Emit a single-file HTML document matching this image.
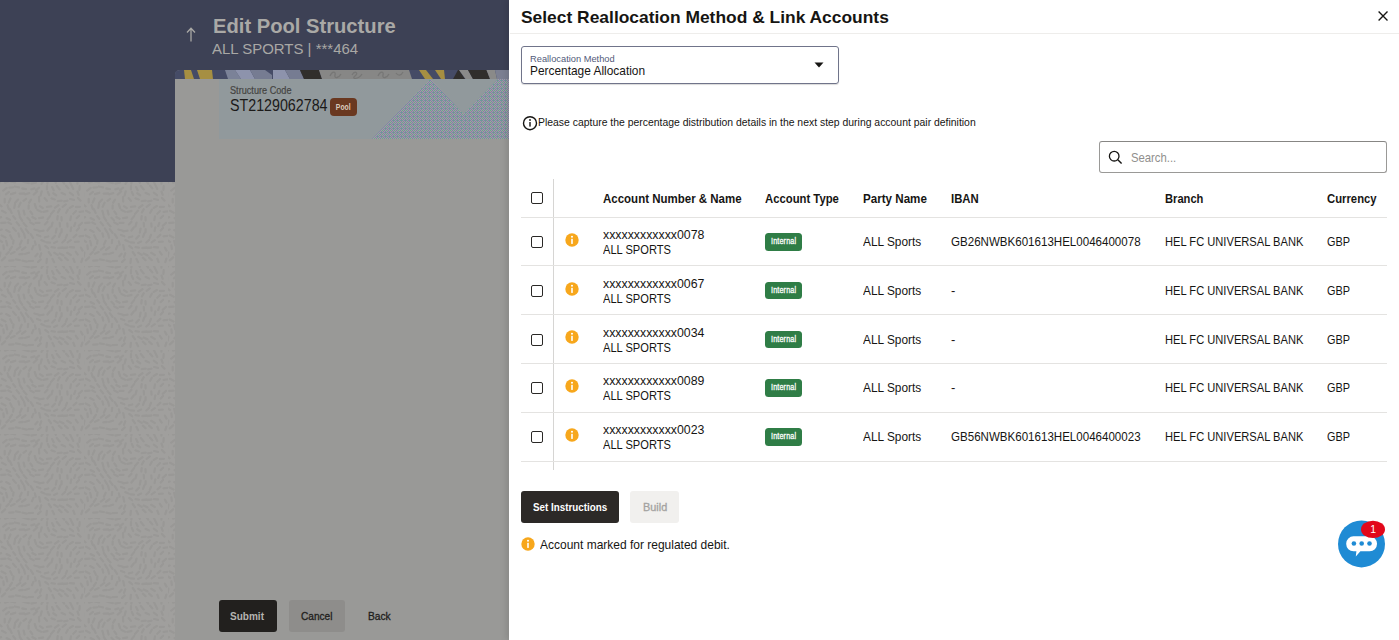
<!DOCTYPE html>
<html>
<head>
<meta charset="utf-8">
<title>Edit Pool Structure</title>
<style>
*{box-sizing:border-box;margin:0;padding:0}
html,body{width:1399px;height:640px;overflow:hidden;background:#9f9e9c;font-family:"Liberation Sans",sans-serif;}
.abs{position:absolute}
.t{position:absolute;transform-origin:0 50%;white-space:nowrap;line-height:1}
#left{position:absolute;left:0;top:0;width:510px;height:640px;background:#a09f9d;overflow:hidden}
#hdr{position:absolute;left:0;top:0;width:510px;height:182px;background:#3d4155}
#card{position:absolute;left:175px;top:70px;width:335px;height:570px;background:#999997;border-top-left-radius:5px}
#info{position:absolute;left:219px;top:79px;width:291px;height:60px;background:#91999c;overflow:hidden}
#drawer{position:absolute;left:509px;top:0;width:890px;height:640px;background:#fff;box-shadow:-3px 0 6px rgba(0,0,0,.10)}
.hline{position:absolute;height:1px;background:#e4e3e1}
.cb{position:absolute;width:12px;height:12px;border:1.2px solid #2a2826;border-radius:2px;background:#fff}
.warn{position:absolute;width:14px;height:14px}
.badge{position:absolute;width:37.300px;height:17.500px;background:#2f7d46;border-radius:3.500px;color:#fff;font-size:9px;line-height:17.500px;text-align:center}
.badge span{display:inline-block;transform:scaleX(.8);letter-spacing:.15px;-webkit-text-stroke:.3px #fff}
.c{color:#161513}
.th{font-size:13px;font-weight:bold}
.td{font-size:13px}
</style>
</head>
<body>
<div id="left">
  <div id="hdr"></div>
  <svg class="abs" style="left:0;top:182px" width="175" height="458"><defs><pattern id="tx" width="84" height="84" patternUnits="userSpaceOnUse"><path d="M1.2 -1.7l-2.6 3.7M8.8 -0.6l-3.8 1.2M15.1 0.3l-4.0 -0.6M23.6 -0.3l-3.4 -1.3M28.8 1.2l-4.1 -1.0M35.9 0.7l-4.5 0.8M43.4 -1.1l-1.9 2.9M47.7 -1.6l-0.3 3.3M54.4 -2.1l1.4 2.9M61.5 -1.9l2.7 3.4M69.1 -1.4l1.8 3.4M77.5 -1.9l-0.1 3.6M6.7 5.9l-3.5 2.7M12.9 5.4l-3.5 0.3M19.0 5.4l-4.2 -0.9M26.0 7.1l-3.7 -0.6M34.4 6.4l-3.1 0.9M39.1 5.7l-3.0 2.5M47.0 4.1l-0.1 3.3M52.1 5.1l1.6 3.2M56.8 3.9l2.9 3.5M66.1 3.7l2.3 2.7M71.4 3.0l1.9 3.9M79.7 4.2l-0.3 3.8M-0.9 10.9l-0.0 3.4M8.9 9.9l-3.0 2.4M15.3 10.8l-4.3 1.4M24.1 11.3l-4.4 0.4M29.3 11.2l-4.3 1.1M37.1 9.5l-3.4 3.1M41.7 9.4l-1.1 4.1M47.8 10.0l1.4 3.0M53.3 11.2l2.9 2.1M61.6 10.9l3.5 1.6M69.8 10.7l3.2 2.5M77.5 9.6l1.2 3.2M4.7 17.0l0.0 3.5M10.5 16.5l-1.8 4.1M18.1 17.5l-3.0 3.3M26.1 16.8l-2.6 2.1M31.0 17.6l-1.8 3.1M39.0 15.2l0.2 4.3M44.7 16.2l2.2 2.6M51.5 16.4l3.3 1.1M57.7 19.2l4.0 -0.6M64.1 19.3l3.4 -0.6M70.2 17.0l3.7 0.9M77.9 15.9l2.6 2.7M-1.2 21.9l2.8 2.4M7.5 23.2l1.3 3.9M14.9 22.5l-0.6 3.3M20.6 20.8l-1.9 4.0M28.7 23.5l-0.1 3.2M34.7 22.0l1.4 4.0M40.0 24.3l2.8 1.7M46.9 24.8l4.4 -0.5M54.9 25.7l3.6 -2.4M62.6 24.9l3.3 -2.5M69.6 25.9l3.3 -1.9M75.9 25.0l4.0 -0.2M2.1 28.8l3.6 1.9M9.9 27.2l1.8 3.7M18.4 28.9l1.1 4.1M23.6 28.6l1.0 3.9M30.4 29.5l1.9 2.7M37.4 28.0l3.7 1.7M43.4 29.8l4.1 -0.8M51.0 32.0l3.0 -3.4M57.9 30.4l1.8 -3.1M66.2 30.8l1.6 -3.1M73.3 31.7l2.7 -2.7M79.6 29.8l4.1 -0.4M-2.9 36.6l4.1 -1.5M6.6 36.1l3.4 1.6M13.2 34.2l2.1 2.6M19.8 35.0l2.4 3.7M27.4 35.8l2.5 2.5M32.4 35.1l3.2 1.6M39.1 36.2l4.0 -0.7M47.6 37.3l2.7 -3.4M57.3 37.5l0.4 -3.3M61.6 38.5l-0.1 -3.3M70.3 38.0l0.7 -3.6M76.7 36.1l2.4 -2.4M1.2 41.0l4.4 -0.3M8.3 40.4l2.9 1.5M16.6 40.3l2.6 3.1M23.5 41.0l3.0 3.4M30.3 40.4l3.4 1.8M35.6 40.8l3.9 0.1M44.9 42.5l2.5 -2.6M51.5 44.4l1.1 -3.8M60.0 44.5l-0.3 -3.7M67.5 44.6l-0.2 -3.3M74.2 44.1l1.1 -3.2M78.7 43.8l3.3 -3.0M-2.5 48.8l4.2 -1.3M6.2 48.1l3.4 1.8M13.1 45.7l2.8 3.2M20.9 46.5l2.1 3.6M25.8 47.1l2.7 3.7M34.4 47.5l4.2 1.1M39.3 49.4l4.3 -0.8M47.4 48.5l2.3 -3.0M55.8 50.5l0.8 -3.8M61.5 50.4l0.1 -3.3M70.6 49.0l0.7 -3.6M76.8 48.5l2.2 -2.6M1.6 53.5l3.9 2.0M10.2 53.3l1.7 3.5M18.4 51.3l0.9 3.4M24.0 51.5l1.1 4.1M30.7 52.2l2.4 3.6M36.9 52.9l3.5 1.4M44.9 55.4l3.4 -0.9M52.2 56.6l2.7 -2.9M59.0 55.1l1.3 -3.7M65.8 55.7l1.3 -3.0M73.5 55.3l2.8 -2.5M79.5 54.4l3.8 -0.6M-1.1 57.9l3.3 2.1M6.2 58.9l1.0 4.4M13.5 58.3l-0.4 3.4M21.7 58.7l-1.8 4.1M28.2 57.8l-0.4 3.4M34.9 59.4l0.8 3.3M41.3 58.1l3.2 1.4M46.4 60.3l3.6 0.3M54.1 61.0l3.0 -1.5M62.3 60.5l2.8 -2.7M67.6 60.4l3.2 -2.3M74.9 59.9l3.8 -0.3M3.4 63.5l0.4 3.5M12.0 64.7l-2.2 3.3M20.3 64.9l-3.5 2.7M25.5 65.3l-3.5 2.5M33.4 63.9l-1.4 3.3M39.2 63.1l1.0 4.5M45.3 64.0l2.8 2.2M51.5 65.1l3.3 0.6M58.4 66.0l4.3 -0.5M63.3 66.0l4.1 -0.5M70.0 65.1l4.1 0.4M80.9 65.6l1.6 3.0M0.4 70.7l-0.7 3.8M8.7 70.1l-2.3 2.3M14.6 70.0l-3.6 1.7M22.7 72.0l-3.4 0.4M29.1 70.6l-4.2 1.4M37.6 71.8l-2.2 2.5M41.3 71.3l-1.3 3.6M48.7 70.0l2.2 3.2M54.3 70.7l3.4 2.2M59.6 71.5l3.9 1.9M67.2 70.8l3.6 2.2M75.8 69.8l1.9 2.8M5.1 75.3l-3.2 3.1M13.6 78.3l-4.4 0.3M19.9 78.1l-4.0 -0.7M26.6 79.7l-4.2 -1.0M32.9 78.9l-4.2 0.3M40.7 77.4l-2.7 2.7M46.9 76.8l-0.4 4.2M52.5 76.9l1.6 3.4M58.8 75.7l2.7 2.5M65.1 75.6l2.7 2.5M73.3 76.7l1.3 3.3M82.4 76.6l-1.1 3.5" stroke="#999896" stroke-width="2.300" stroke-linecap="round" fill="none"/></pattern></defs><rect width="175" height="458" fill="url(#tx)"/></svg>
  <svg class="abs" style="left:186px;top:27px" width="10" height="15" viewBox="0 0 10 15"><path d="M5 14.5V1.5M1 5.5L5 1.2L9 5.5" fill="none" stroke="#a9a8a5" stroke-width="1.3"/></svg>
  <div class="t" id="t1" style="transform:scaleX(1.0087);left:213.1px;top:15.7px;font-size:20px;font-weight:bold;color:#aaa9a6">Edit Pool Structure</div>
  <div class="t" id="t2" style="transform:scaleX(0.9974);left:212.3px;top:41px;font-size:15px;color:#a9a8a5">ALL SPORTS | ***464</div>
  <div id="card"></div>
  <svg class="abs" id="strip" style="left:175px;top:70px" width="335" height="9" viewBox="175 0 335 9">
    <defs><clipPath id="cp"><path d="M175 9V4Q175 0 180 0H510V9Z"/></clipPath></defs>
    <g clip-path="url(#cp)">
      <rect x="175" y="0" width="335" height="9" fill="#454b66"/>
      <polygon points="184,0 191,0 194,9 185,9" fill="#a68f42"/>
      <polygon points="197,0 212,0 213,9 200,9" fill="#a68f42"/>
      <polygon points="225,0 235,0 241,9 228,9" fill="#7b8298"/>
      <polygon points="235,0 250,0 255,9 241,9" fill="#8d93ac"/>
      <polygon points="250,0 265,0 272,5 272,9 255,9" fill="#767c92"/>
      <polygon points="273,0 285,0 290,9 273,9" fill="#8d93ac"/>
      <polygon points="285,0 300,0 304,9 290,9" fill="#767c92"/>
      <polygon points="300,0 319,0 322,9 304,9" fill="#302e2c"/>
      <polygon points="319,0 409,0 412,9 322,9" fill="#878786"/>
      <path d="M330 6c2-5 6-5 5-1s4 3 6-1M352 5c3-5 7-2 3 1s3 4 7-2M378 6c2-5 6-5 5-1s4 3 6-1M396 3c2 3 5 3 7-1" fill="none" stroke="#777776" stroke-width="1.300"/>
      <polygon points="419,0 426,0 433,9 425,9" fill="#a68f42"/>
      <polygon points="435,0 444,0 445,9 441,9" fill="#a68f42"/>
      <polygon points="458,0 459,0 465,9 453,9" fill="#302e2c"/>
      <polygon points="459,0 468,0 473,9 465.500,9" fill="#8a8a89"/>
      <polygon points="468,0 486.500,0 490,9 473,9" fill="#302e2c"/>
      <polygon points="486.500,0 495,0 497,9 490,9" fill="#8a8a89"/>
      <polygon points="495,0 510,0 510,9 497,9" fill="#7c8092"/>
    </g>
  </svg>
  <div id="info">
    <svg class="abs" style="left:0;top:0" width="291" height="60" viewBox="219 79 291 60">
      <defs><pattern id="dz" width="4" height="4" patternUnits="userSpaceOnUse"><rect width="4" height="4" fill="#a3a09f"/><rect x="0" y="0" width="1" height="1" fill="#7c82a8"/><rect x="1" y="0" width="1" height="1" fill="#62ac88"/><rect x="2" y="0" width="1" height="1" fill="#7c82a8"/><rect x="1" y="1" width="1" height="1" fill="#7c82a8"/><rect x="3" y="1" width="1" height="1" fill="#7c82a8"/><rect x="0" y="2" width="1" height="1" fill="#7c82a8"/><rect x="2" y="2" width="1" height="1" fill="#62ac88"/><rect x="1" y="3" width="1" height="1" fill="#7c82a8"/><rect x="3" y="3" width="1" height="1" fill="#7c82a8"/></pattern></defs>
      <polygon points="372,139 430.500,79 463.500,114 498,79 510,79 510,139" fill="url(#dz)"/>
    </svg>
  </div>
  <div class="t" id="t3" style="transform:scaleX(0.9143);-webkit-text-stroke:.2px #454442;left:229.8px;top:85.8px;font-size:10px;color:#454442">Structure Code</div>
  <div class="t" id="t4" style="transform:scaleX(0.8909);left:229.8px;top:98.4px;font-size:16px;color:#1b1a19">ST2129062784</div>
  <div class="abs" style="left:330px;top:98px;width:27px;height:18px;background:#6a3820;border-radius:4px;color:#d9cbbd;font-size:8.5px;line-height:18px;text-align:center"><span style="display:inline-block;transform:scaleX(.8);font-weight:bold">Pool</span></div>

  <div class="abs" style="left:219px;top:600px;width:58px;height:32px;background:#22201e;border-radius:3px"></div>
  <div class="t" id="t5" style="transform:scaleX(0.9120);left:230.4px;top:611.2px;font-size:11px;font-weight:bold;color:#b5b4b1">Submit</div>
  <div class="abs" style="left:289px;top:600px;width:56px;height:32px;background:#8e8d8b;border-radius:3px"></div>
  <div class="t" id="t6" style="transform:scaleX(0.9168);-webkit-text-stroke:.3px #1f1e1c;left:300.5px;top:611.2px;font-size:11px;color:#1f1e1c">Cancel</div>
  <div class="t" id="t7" style="transform:scaleX(0.9277);-webkit-text-stroke:.3px #1f1e1c;left:368.1px;top:611.2px;font-size:11px;color:#1f1e1c">Back</div>
</div>

<div id="drawer"></div>
<div id="dc" class="abs" style="left:0;top:0;width:1399px;height:640px">
  <div class="t c" id="d1" style="transform:scaleX(1.0238);left:520.9px;top:9.3px;font-size:17px;font-weight:bold">Select Reallocation Method &amp; Link Accounts</div>
  <svg class="abs" style="left:1378px;top:11px" width="10" height="10" viewBox="0 0 10 10"><path d="M.6 .6L9.500 9.500M9.500 .6L.6 9.500" stroke="#161513" stroke-width="1.350" fill="none"/></svg>
  <div class="hline" style="left:510px;top:33px;width:889px;background:#eeedeb"></div>

  <div class="abs" style="left:521px;top:46px;width:317.500px;height:37.500px;border:1px solid #70748a;border-radius:3px;box-shadow:0 1px 1px rgba(0,0,0,.15)"></div>
  <div class="t" id="d2" style="transform:scaleX(0.9780);left:530.0px;top:54px;font-size:9.5px;color:#525a7a">Reallocation Method</div>
  <div class="t c" id="d3" style="transform:scaleX(0.9152);left:529.8px;top:64px;font-size:13px">Percentage Allocation</div>
  <svg class="abs" style="left:814px;top:62px" width="10" height="6" viewBox="0 0 10 6"><path d="M0.5 0.5H9.5L5 5.5Z" fill="#161513"/></svg>

  <svg class="abs" style="left:522px;top:115px" width="16" height="16" viewBox="0 0 16 16"><circle cx="8" cy="8.200" r="6.500" fill="none" stroke="#161513" stroke-width="1.400"/><rect x="7.3" y="7" width="1.4" height="4.6" fill="#161513"/><circle cx="8" cy="5" r="0.9" fill="#161513"/></svg>
  <div class="t c" id="d4" style="transform:scaleX(1.0023);left:537.9px;top:118px;font-size:10.400px">Please capture the percentage distribution details in the next step during account pair definition</div>

  <div class="abs" style="left:1099px;top:141px;width:288.300px;height:32px;border:1px solid #9a9997;border-top-color:#878684;border-radius:3px"></div>
  <svg class="abs" style="left:1108px;top:150px" width="15" height="15" viewBox="0 0 15 15"><circle cx="6.2" cy="6.2" r="4.8" fill="none" stroke="#161513" stroke-width="1.3"/><path d="M9.8 9.8L13.6 13.6" stroke="#161513" stroke-width="1.4"/></svg>
  <div class="t" id="d5" style="transform:scaleX(0.8687);left:1130.7px;top:151px;font-size:13px;color:#908f8d">Search...</div>

  <div id="tbl">
<div class="abs" style="left:553.300px;top:179px;width:1px;height:291px;background:#d6d5d3"></div>
<div class="cb" style="left:531px;top:192px"></div>
<div class="t c th" id="h1" style="transform:scaleX(0.8842);left:602.8px;top:192px">Account Number &amp; Name</div>
<div class="t c th" id="h2" style="transform:scaleX(0.8694);left:765.2px;top:192px">Account Type</div>
<div class="t c th" id="h3" style="transform:scaleX(0.8931);left:863.0px;top:192px">Party Name</div>
<div class="t c th" id="h4" style="transform:scaleX(0.8716);left:950.8px;top:192px">IBAN</div>
<div class="t c th" id="h5" style="transform:scaleX(0.8572);left:1164.5px;top:192px">Branch</div>
<div class="t c th" id="h6" style="transform:scaleX(0.8690);left:1326.5px;top:192px">Currency</div>
<div class="hline" style="left:521px;top:216.5px;width:866px"></div>
<div class="hline" style="left:521px;top:265.3px;width:866px"></div>
<div class="hline" style="left:521px;top:314.1px;width:866px"></div>
<div class="hline" style="left:521px;top:362.9px;width:866px"></div>
<div class="hline" style="left:521px;top:411.7px;width:866px"></div>
<div class="hline" style="left:521px;top:460.5px;width:866px"></div>
<div class="cb" style="left:531px;top:236.0px"></div>
<svg class="warn" style="left:565.3px;top:232.8px" viewBox="0 0 14 14"><circle cx="7" cy="7" r="6.700" fill="#f7a71c"/><rect x="6.200" y="5.700" width="1.600" height="5.200" rx=".4" fill="#fff"/><circle cx="7" cy="3.700" r="1.050" fill="#fff"/></svg>
<div class="t c td" id="r0a" style="transform:scaleX(0.9484);left:602.8px;top:228.0px">xxxxxxxxxxxx0078</div>
<div class="t c td" id="r0b" style="transform:scaleX(0.8543);left:602.8px;top:243.0px">ALL SPORTS</div>
<div class="badge" style="left:765px;top:233.0px"><span>Internal</span></div>
<div class="t c td" id="r0c" style="transform:scaleX(0.9116);left:863.0px;top:235.0px">ALL Sports</div>
<div class="t c td" id="r0d" style="transform:scaleX(0.8892);left:950.9px;top:235.0px">GB26NWBK601613HEL0046400078</div>
<div class="t c td" id="r0e" style="transform:scaleX(0.8565);left:1164.5px;top:235.0px">HEL FC UNIVERSAL BANK</div>
<div class="t c td" id="r0f" style="transform:scaleX(0.8373);left:1326.5px;top:235.0px">GBP</div>
<div class="cb" style="left:531px;top:284.8px"></div>
<svg class="warn" style="left:565.3px;top:281.6px" viewBox="0 0 14 14"><circle cx="7" cy="7" r="6.700" fill="#f7a71c"/><rect x="6.200" y="5.700" width="1.600" height="5.200" rx=".4" fill="#fff"/><circle cx="7" cy="3.700" r="1.050" fill="#fff"/></svg>
<div class="t c td" id="r1a" style="transform:scaleX(0.9484);left:602.8px;top:276.8px">xxxxxxxxxxxx0067</div>
<div class="t c td" id="r1b" style="transform:scaleX(0.8543);left:602.8px;top:291.8px">ALL SPORTS</div>
<div class="badge" style="left:765px;top:281.8px"><span>Internal</span></div>
<div class="t c td" id="r1c" style="transform:scaleX(0.9116);left:863.0px;top:283.8px">ALL Sports</div>
<div class="t c td" id="r1d" style="left:951px;top:283.8px">-</div>
<div class="t c td" id="r1e" style="transform:scaleX(0.8565);left:1164.5px;top:283.8px">HEL FC UNIVERSAL BANK</div>
<div class="t c td" id="r1f" style="transform:scaleX(0.8373);left:1326.5px;top:283.8px">GBP</div>
<div class="cb" style="left:531px;top:333.6px"></div>
<svg class="warn" style="left:565.3px;top:330.4px" viewBox="0 0 14 14"><circle cx="7" cy="7" r="6.700" fill="#f7a71c"/><rect x="6.200" y="5.700" width="1.600" height="5.200" rx=".4" fill="#fff"/><circle cx="7" cy="3.700" r="1.050" fill="#fff"/></svg>
<div class="t c td" id="r2a" style="transform:scaleX(0.9484);left:602.8px;top:325.6px">xxxxxxxxxxxx0034</div>
<div class="t c td" id="r2b" style="transform:scaleX(0.8543);left:602.8px;top:340.6px">ALL SPORTS</div>
<div class="badge" style="left:765px;top:330.6px"><span>Internal</span></div>
<div class="t c td" id="r2c" style="transform:scaleX(0.9116);left:863.0px;top:332.6px">ALL Sports</div>
<div class="t c td" id="r2d" style="left:951px;top:332.6px">-</div>
<div class="t c td" id="r2e" style="transform:scaleX(0.8565);left:1164.5px;top:332.6px">HEL FC UNIVERSAL BANK</div>
<div class="t c td" id="r2f" style="transform:scaleX(0.8373);left:1326.5px;top:332.6px">GBP</div>
<div class="cb" style="left:531px;top:382.4px"></div>
<svg class="warn" style="left:565.3px;top:379.2px" viewBox="0 0 14 14"><circle cx="7" cy="7" r="6.700" fill="#f7a71c"/><rect x="6.200" y="5.700" width="1.600" height="5.200" rx=".4" fill="#fff"/><circle cx="7" cy="3.700" r="1.050" fill="#fff"/></svg>
<div class="t c td" id="r3a" style="transform:scaleX(0.9484);left:602.8px;top:374.4px">xxxxxxxxxxxx0089</div>
<div class="t c td" id="r3b" style="transform:scaleX(0.8543);left:602.8px;top:389.4px">ALL SPORTS</div>
<div class="badge" style="left:765px;top:379.4px"><span>Internal</span></div>
<div class="t c td" id="r3c" style="transform:scaleX(0.9116);left:863.0px;top:381.4px">ALL Sports</div>
<div class="t c td" id="r3d" style="left:951px;top:381.4px">-</div>
<div class="t c td" id="r3e" style="transform:scaleX(0.8565);left:1164.5px;top:381.4px">HEL FC UNIVERSAL BANK</div>
<div class="t c td" id="r3f" style="transform:scaleX(0.8373);left:1326.5px;top:381.4px">GBP</div>
<div class="cb" style="left:531px;top:431.2px"></div>
<svg class="warn" style="left:565.3px;top:428.0px" viewBox="0 0 14 14"><circle cx="7" cy="7" r="6.700" fill="#f7a71c"/><rect x="6.200" y="5.700" width="1.600" height="5.200" rx=".4" fill="#fff"/><circle cx="7" cy="3.700" r="1.050" fill="#fff"/></svg>
<div class="t c td" id="r4a" style="transform:scaleX(0.9484);left:602.8px;top:423.2px">xxxxxxxxxxxx0023</div>
<div class="t c td" id="r4b" style="transform:scaleX(0.8543);left:602.8px;top:438.2px">ALL SPORTS</div>
<div class="badge" style="left:765px;top:428.2px"><span>Internal</span></div>
<div class="t c td" id="r4c" style="transform:scaleX(0.9116);left:863.0px;top:430.2px">ALL Sports</div>
<div class="t c td" id="r4d" style="transform:scaleX(0.8892);left:950.9px;top:430.2px">GB56NWBK601613HEL0046400023</div>
<div class="t c td" id="r4e" style="transform:scaleX(0.8565);left:1164.5px;top:430.2px">HEL FC UNIVERSAL BANK</div>
<div class="t c td" id="r4f" style="transform:scaleX(0.8373);left:1326.5px;top:430.2px">GBP</div>
<svg class="warn" style="left:521px;top:537.2px" viewBox="0 0 14 14"><circle cx="7" cy="7" r="6.700" fill="#f7a71c"/><rect x="6.200" y="5.700" width="1.600" height="5.200" rx=".4" fill="#fff"/><circle cx="7" cy="3.700" r="1.050" fill="#fff"/></svg>
</div><!--/tbl-->

  <div class="abs" style="left:521px;top:491px;width:98px;height:32px;background:#2c2927;border-radius:3px"></div>
  <div class="t" id="d6" style="transform:scaleX(0.8914);left:532.5px;top:502px;font-size:11px;font-weight:bold;color:#fff">Set Instructions</div>
  <div class="abs" style="left:630px;top:491px;width:49px;height:32px;background:#f1f0ee;border-radius:3px"></div>
  <div class="t" id="d7" style="transform:scaleX(0.9890);-webkit-text-stroke:.3px #a3a2a0;left:642.5px;top:502px;font-size:11px;color:#a3a2a0">Build</div>

  <div class="t c" id="d8" style="transform:scaleX(0.9221);left:540.4px;top:538px;font-size:13px">Account marked for regulated debit.</div>

  <svg class="abs" style="left:1334px;top:516px" width="56" height="56" viewBox="0 0 56 56">
    <circle cx="27.500" cy="27.900" r="23.500" fill="#1f8bd4"/>
    <path d="M19.500 20.300h16.200a7.300 7.300 0 0 1 7.300 7.300v.4a7.300 7.300 0 0 1-7.300 7.300h-9.300l-4.600 5.200l.6-5.200h-2.900a7.300 7.300 0 0 1-7.300-7.300v-.4a7.300 7.300 0 0 1 7.300-7.300z" fill="#fff"/>
    <circle cx="19.900" cy="27.500" r="2.300" fill="#1f8bd4"/><circle cx="27.700" cy="27.500" r="2.300" fill="#1f8bd4"/><circle cx="35.500" cy="27.500" r="2.300" fill="#1f8bd4"/>
    <ellipse cx="39" cy="13.400" rx="12" ry="8.600" fill="#e2071a"/>
    <text x="39.200" y="17.300" font-family="Liberation Sans, sans-serif" font-size="10.500" fill="#fff" text-anchor="middle">1</text>
  </svg>
</div>
</body>
</html>
